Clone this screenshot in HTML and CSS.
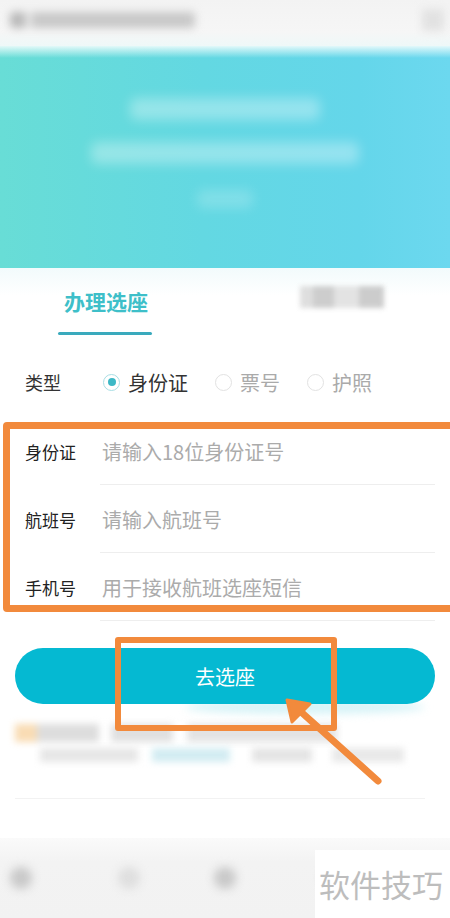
FILE: index.html
```html
<!DOCTYPE html>
<html lang="zh">
<head>
<meta charset="utf-8">
<title>办理选座</title>
<link rel="stylesheet" href="styles.css">
</head>
<body>
<div class="page">
  <header class="topbar">
    <div class="blur-title"></div>
    <div class="blur-icon"></div>
  </header>

  <section class="banner">
    <div class="b-line b1"></div>
    <div class="b-line b2"></div>
    <div class="b-line b3"></div>
  </section>

  <section class="card">
    <nav class="tabs">
      <div class="tab active">办理选座<span class="underline"></span></div>
      <div class="tab other"><span class="blur-tab"></span></div>
    </nav>

    <div class="type-row">
      <span class="type-label">类型</span>
      <label class="opt checked"><span class="radio"><i></i></span>身份证</label>
      <label class="opt"><span class="radio"></span>票号</label>
      <label class="opt"><span class="radio"></span>护照</label>
    </div>

    <div class="fields">
      <div class="field"><span class="f-label">身份证</span><span class="f-input">请输入18位身份证号</span></div>
      <div class="field"><span class="f-label">航班号</span><span class="f-input">请输入航班号</span></div>
      <div class="field"><span class="f-label">手机号</span><span class="f-input">用于接收航班选座短信</span></div>
    </div>

    <div class="btn-wrap">
      <button class="go-btn">去选座</button>
      <div class="btn-glow"></div>
    </div>

    <div class="note">
      <div class="note-row r1">
        <span class="nb orange"></span><span class="nb g1"></span><span class="nb g2"></span><span class="nb g3"></span>
      </div>
      <div class="note-row r2">
        <span class="nb g4"></span><span class="nb blue"></span><span class="nb g5"></span><span class="nb g6"></span>
      </div>
    </div>
    <div class="thin-line"></div>
  </section>

  <footer class="bottom">
    <div class="dots">
      <span class="dot"></span><span class="dot light"></span><span class="dot"></span><span class="dot"></span>
    </div>
    <div class="watermark">软件技巧</div>
  </footer>

  <div class="annot annot-form"></div>
  <div class="annot annot-btn"></div>
  <svg class="arrow" width="450" height="918" viewBox="0 0 450 918">
    <line x1="378" y1="781" x2="300" y2="711" stroke="#f28a3c" stroke-width="7" stroke-linecap="round"/>
    <polygon points="287,700 292,722 310,704" fill="#f28a3c" stroke="#f28a3c" stroke-width="3" stroke-linejoin="round"/>
  </svg>
</div>
</body>
</html>
```

FILE: styles.css
```css
* { box-sizing: border-box; }
html, body { margin: 0; padding: 0; }
body {
  font-family: "Noto Sans CJK SC", "Noto Sans", sans-serif;
  background: #fff;
  width: 450px;
  height: 918px;
  overflow: hidden;
}
.page {
  position: relative;
  width: 450px;
  height: 918px;
  overflow: hidden;
  display: flex;
  flex-direction: column;
}

/* top bar */
.topbar {
  height: 46px;
  background: linear-gradient(#f3f3f3, #f6f6f6 70%, #eef8f8);
  display: flex;
  align-items: center;
  justify-content: space-between;
  padding: 0 6px 6px 10px;
}
.blur-title {
  width: 185px;
  height: 16px;
  background: linear-gradient(90deg, #b8b8b8 0 8%, #e6e6e6 8% 12%, #c8c8c8 12% 100%);
  filter: blur(4px);
  border-radius: 4px;
}
.blur-icon {
  width: 22px;
  height: 22px;
  background: #e2e2e2;
  filter: blur(4px);
}

/* banner */
.banner {
  height: 222px;
  background:
    linear-gradient(rgba(240,252,252,0.9), rgba(240,252,252,0) 12px),
    linear-gradient(90deg, #68ddd6 0%, #63d8e2 45%, #64d6ea 80%, #6cd8ef 100%);
  display: flex;
  flex-direction: column;
  align-items: center;
  padding-top: 52px;
  position: relative;
}
.b-line {
  background: rgba(255,255,255,0.32);
  filter: blur(6px);
  border-radius: 6px;
}
.b1 { width: 190px; height: 22px; }
.b2 { width: 268px; height: 22px; margin-top: 22px; }
.b3 { width: 56px; height: 18px; margin-top: 26px; opacity: 0.6; }

/* card */
.card {
  flex: 1;
  background: #fff;
  display: flex;
  flex-direction: column;
  position: relative;
}
.tabs {
  height: 68px;
  display: flex;
  background: linear-gradient(#f2fbfc, #fff 40%);
}
.tab {
  position: relative;
  font-size: 21px;
  font-weight: 700;
  line-height: 1;
}
.tab.active {
  color: #3ebfc9;
  margin-left: 64px;
  padding-top: 23px;
  width: 86px;
}
.underline {
  position: absolute;
  left: -6px;
  top: 64px;
  width: 94px;
  height: 3px;
  background: #3aaabd;
  border-radius: 2px;
}
.tab.other {
  margin-left: 150px;
  padding-top: 18px;
}
.blur-tab {
  display: block;
  width: 84px;
  height: 22px;
  background: linear-gradient(90deg, #d4d4d4 0 15%, #bdbdbd 15% 40%, #dadada 40% 70%, #bcbcbc 70% 100%);
  filter: blur(2.5px);
  opacity: 0.75;
}

.type-row {
  height: 68px;
  margin-top: 12px;
  display: flex;
  align-items: center;
  padding-left: 25px;
  font-size: 20px;
  color: #333;
}
.type-label { font-size: 18px; width: 78px; }
.opt {
  display: flex;
  align-items: center;
  color: #aaa;
  margin-right: 27px;
}
.opt.checked { color: #333; margin-right: 27px; }
.radio {
  width: 17px;
  height: 17px;
  border: 1px solid #e2e2e2;
  border-radius: 50%;
  margin-right: 8px;
  display: flex;
  align-items: center;
  justify-content: center;
}
.opt.checked .radio { border: 1.5px solid #a8dee4; }
.radio i {
  width: 8px;
  height: 8px;
  border-radius: 50%;
  background: #3cb8c6;
}

/* fields */
.fields { display: flex; flex-direction: column; margin-top: 1px; }
.field {
  height: 68px;
  display: flex;
  align-items: center;
  padding-left: 25px;
  position: relative;
}
.field::after {
  content: "";
  position: absolute;
  left: 100px;
  right: 15px;
  bottom: 0;
  height: 1px;
  background: #eeeeee;
}
.f-label { font-size: 17px; color: #222; width: 77px; }
.f-input { font-size: 20px; color: #ababab; }

/* button */
.btn-wrap {
  position: relative;
  margin: 27px 15px 0;
}
.go-btn {
  display: block;
  width: 420px;
  height: 56px;
  border: none;
  border-radius: 28px;
  background: #05b9d2;
  color: #fff;
  font-family: inherit;
  font-size: 20px;
  position: relative;
  z-index: 1;
}
.btn-glow {
  position: absolute;
  left: 170px;
  right: 10px;
  top: 52px;
  height: 14px;
  background: #d6f3f7;
  filter: blur(4px);
  border-radius: 50%;
}

.note { display: flex; flex-direction: column; margin-top: 20px; padding-left: 15px; }
.note-row { display: flex; align-items: center; filter: blur(3.5px); }
.nb { display: block; height: 18px; background: #e2e2e2; }
.r1 .orange { width: 22px; background: #f9dcb4; }
.r1 .g1 { width: 62px; background: #dddddd; }
.r1 .g2 { width: 62px; margin-left: 12px; background: #e0e0e0; }
.r1 .g3 { width: 150px; margin-left: 14px; background: #e3e3e3; }
.r2 { margin-top: 6px; padding-left: 25px; }
.r2 .nb { height: 14px; }
.r2 .g4 { width: 98px; background: #e6e6e6; }
.r2 .blue { width: 78px; margin-left: 14px; background: #d2ecf2; }
.r2 .g5 { width: 60px; margin-left: 22px; background: #e4e4e4; }
.r2 .g6 { width: 72px; margin-left: 20px; background: #e8e8e8; }
.thin-line {
  margin: 36px 25px 0 15px;
  height: 1px;
  background: #f2f2f2;
}

/* bottom */
.bottom {
  height: 80px;
  background: linear-gradient(#fafafa, #f3f3f3 30%, #f2f2f2);
  position: relative;
  display: flex;
  align-items: center;
}
.dots { display: flex; align-items: center; padding-left: 10px; filter: blur(5px); }
.dot { width: 22px; height: 22px; border-radius: 50%; background: #c8c8c8; margin-right: 86px; }
.dot.light { background: #dedede; margin-right: 74px; }
.watermark {
  position: absolute;
  left: 315px;
  top: 12px;
  width: 135px;
  height: 68px;
  background: #fff;
  color: #bdbdbd;
  font-size: 31px;
  line-height: 68px;
  padding-left: 4px;
}

/* annotations */
.annot {
  position: absolute;
  border: 7px solid #f28a3c;
  border-radius: 4px;
  pointer-events: none;
  z-index: 5;
}
.annot-form { left: 3px; top: 422px; width: 470px; height: 190px; }
.annot-btn { left: 115px; top: 637px; width: 222px; height: 94px; border-width: 6px; border-radius: 3px; }
.arrow { position: absolute; left: 0; top: 0; z-index: 6; pointer-events: none; }
```
